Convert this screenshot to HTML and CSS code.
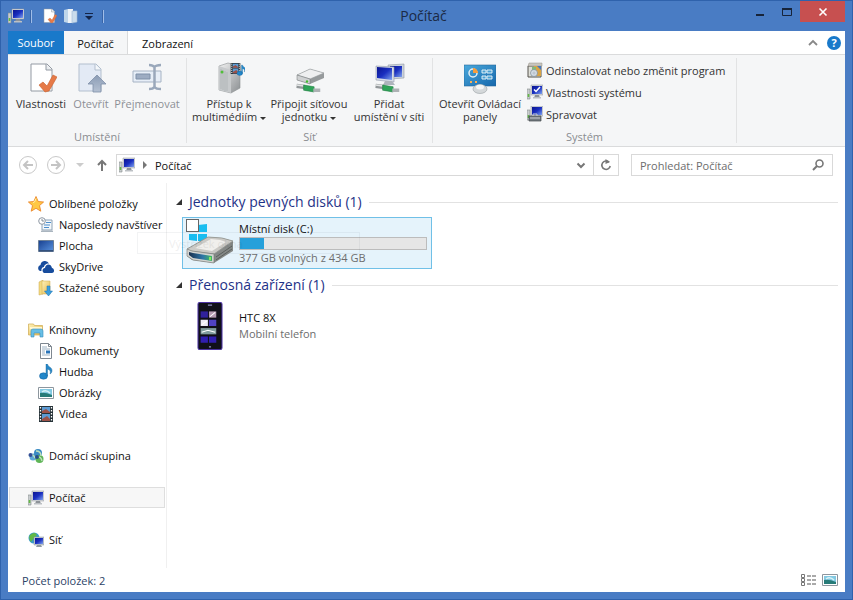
FILE: index.html
```html
<!DOCTYPE html>
<html lang="cs">
<head>
<meta charset="utf-8">
<title>Počítač</title>
<link rel="stylesheet" href="styles.css">
</head>
<body>
<svg class="sprite" aria-hidden="true">
  <defs>
    <linearGradient id="g-screen" x1="0" y1="0" x2="1" y2="1"><stop offset="0" stop-color="#0c1590"/><stop offset=".5" stop-color="#1a2fc0"/><stop offset="1" stop-color="#7fa2ee"/></linearGradient>
    <linearGradient id="g-metal" x1="0" y1="0" x2="1" y2="1"><stop offset="0" stop-color="#f2f2f2"/><stop offset="1" stop-color="#8b8f92"/></linearGradient>
    <linearGradient id="g-blue" x1="0" y1="0" x2="1" y2="1"><stop offset="0" stop-color="#4aa9dc"/><stop offset="1" stop-color="#1667ac"/></linearGradient>
    <linearGradient id="g-folder" x1="0" y1="0" x2="1" y2="1"><stop offset="0" stop-color="#fff3b8"/><stop offset="1" stop-color="#e5b64c"/></linearGradient>
    <linearGradient id="g-arrow" x1="0" y1="0" x2="0" y2="1"><stop offset="0" stop-color="#8b9cb5"/><stop offset="1" stop-color="#b5c1d2"/></linearGradient>
    <linearGradient id="g-front" x1="0" y1="0" x2="1" y2="0"><stop offset="0" stop-color="#19304e"/><stop offset=".6" stop-color="#2f76a8"/><stop offset="1" stop-color="#42b864"/></linearGradient>
    <linearGradient id="g-desk" x1="0" y1="0" x2="1" y2="1"><stop offset="0" stop-color="#173f8f"/><stop offset="1" stop-color="#5a94e0"/></linearGradient>
  </defs>
  <symbol id="computer" viewBox="0 0 16 16">
    <path d="M0 5h3v10H0z" fill="#c9cdcf" stroke="#85898c" stroke-width=".6"/><path d="M.7 10h1.600v3H.7z" fill="#62b944"/>
    <path d="M4 1h12v10H4z" fill="#d6dade" stroke="#8c9298" stroke-width=".5"/><path d="M5 2h10v8H5z" fill="url(#g-screen)"/>
    <path d="M8 11h4l1 3H7z" fill="#8d9298"/><path d="M6 13h8v1.500H6z" fill="#bcc0c4"/>
  </symbol>
  <symbol id="check-page" viewBox="0 0 32 32">
    <path d="M6 2h16l5 5v22H6z" fill="#fff" stroke="#939aa3"/><path d="M21 2v6h6" fill="#e9ecef" stroke="#939aa3"/>
    <path d="M14 23l4-3 4 4 6-11 4 2-8 14-4 1z" fill="#e67a48" stroke="#c85f2b" stroke-width=".6"/>
  </symbol>
  <symbol id="folder-light" viewBox="0 0 16 16">
    <path d="M1 2l4-1v14l-4-1z" fill="#bfd6ea"/><path d="M5 1h5v14H5z" fill="#edf3f8"/><path d="M9 3h5v11l-5 1z" fill="#cadcec" stroke="#9dbbd6" stroke-width=".6"/>
  </symbol>
  <symbol id="open-page" viewBox="0 0 32 32">
    <path d="M4 2h17l5 5v22H4z" fill="#e3eaf5" stroke="#b3bfce"/><path d="M20 2v6h6" fill="#f4f7fa" stroke="#b3bfce"/>
    <path d="M22 13l9 9h-5v8h-8v-8h-5z" fill="url(#g-arrow)" stroke="#7f8fa8" stroke-width=".8"/>
  </symbol>
  <symbol id="rename" viewBox="0 0 32 32">
    <path d="M2 9h28v11H2z" fill="#e7eef7" stroke="#a6b3c4"/><path d="M5 12h14v5H5z" fill="#9dacc2" stroke="#7f90a8"/>
    <path d="M18 3q4 0 5.500 2Q25 3 30 3M18 27q4 0 5.500-2Q25 27 30 27M23.500 5v20" fill="none" stroke="#9aa8bb" stroke-width="2.500"/>
  </symbol>
  <symbol id="film" viewBox="0 0 16 16">
    <path d="M1 0h14v16H1z" fill="#263238"/><path d="M4 1h8v6H4zM4 8h8v7H4z" fill="#5c9bd3"/><path d="M4 5l4-2 4 3v1H4zM4 13l5-3 3 3v2H4z" fill="#9b5148"/>
    <path d="M2.500 1v15M13.500 1v15" stroke="#fff" stroke-width="1.300" stroke-dasharray="1.500 1.500"/>
  </symbol>
  <symbol id="note" viewBox="0 0 16 16">
    <ellipse cx="5.500" cy="12" rx="4" ry="3.200" fill="#2287ca" stroke="#15619f" stroke-width=".5"/>
    <path d="M8 12V0h1.500c0 3 5 3 4.500 7-.2 1.500-1 2.500-2 3 1-3 0-4-2.500-5v7z" fill="#2688c8" stroke="#176398" stroke-width=".4"/>
  </symbol>
  <symbol id="media" viewBox="0 0 32 32">
    <path d="M6 4l9-3 12 3v22l-9 5L6 28z" fill="url(#g-metal)" stroke="#8c9092" stroke-width=".6"/><path d="M6 4l12 4v23L6 28z" fill="#c7cacc"/><path d="M8 7v20M10 8v20M12 9v20M14 10v19" stroke="#a5a9ab" stroke-width=".6"/>
    <circle cx="9" cy="10" r="1.500" fill="#51be39"/><use href="#film" x="17" y="1" width="11" height="11"/><use href="#note" x="23" y="1" width="11" height="15"/>
  </symbol>
  <symbol id="net-cable" viewBox="0 0 32 12">
    <path d="M3 3l8 1 3 2 8 1" stroke="#929799" stroke-width="5" fill="none"/><path d="M3 2l8 1" stroke="#e2e4e5" stroke-width="2"/><path d="M11 2l12 2v6l-12-2z" fill="#2fa358" stroke="#187b3b" stroke-width=".6"/><path d="M22 8h8" stroke="#adb2b4" stroke-width="4"/>
  </symbol>
  <symbol id="netdrive" viewBox="0 0 32 32">
    <path d="M4 13l13-6 14 4v5l-14 6-13-4z" fill="#969a9c"/><path d="M4 13l13-6 14 4-14 6z" fill="#eeeff0" stroke="#94989a" stroke-width=".6"/><path d="M4 13l13 4v5L4 18z" fill="#cfd1d2" stroke="#707577" stroke-width=".5"/>
    <circle cx="14" cy="19.500" r="1.200" fill="#42bd2e"/><use href="#net-cable" x="1" y="21" width="28" height="11"/>
  </symbol>
  <symbol id="addnet" viewBox="0 0 32 32">
    <path d="M15 3l16-1v14l-14 1z" fill="#ccd3dc" stroke="#9199a5" stroke-width=".6"/><path d="M17 4h12v11H17z" fill="url(#g-screen)"/>
    <path d="M3 4l18 1v15L3 18z" fill="#d6dce6" stroke="#9099aa" stroke-width=".6"/><path d="M4 5l15 1v12L4 16z" fill="url(#g-screen)"/><path d="M12 19h7l3 4H10z" fill="#aeb4bc"/>
    <use href="#net-cable" x="0" y="21" width="28" height="11"/>
  </symbol>
  <symbol id="control" viewBox="0 0 32 32">
    <path d="M0 3h32v21H0z" fill="url(#g-blue)" stroke="#25699b" stroke-width=".6"/><circle cx="9" cy="11" r="4" fill="none" stroke="#e3eff5" stroke-width="1.500"/><path d="M9 11V6a5 5 0 0 1 5 5z" fill="#f49d3e"/>
    <path d="M18 8h4v3h-4zM23 8h5v3h-5zM18 14h4v3h-4zM23 14h5v3h-5z" fill="#4ba1d2" stroke="#eff8fb" stroke-width=".9"/><path d="M6 20h2M11 20h2" stroke="#ffb052" stroke-width="2"/>
    <ellipse cx="16" cy="27" rx="7" ry="4.500" fill="#d4d8da" stroke="#989fa2" stroke-width=".6"/><ellipse cx="16" cy="25" rx="4" ry="2.500" fill="#f5f6f6"/>
  </symbol>
  <symbol id="uninstall" viewBox="0 0 16 16">
    <path d="M1 4h13v11H1z" fill="#dfdfd7" stroke="#55524d"/><path d="M2 1h13v3H1z" fill="#c9c6bf" stroke="#96928b" stroke-width=".5"/><path d="M7 4h7v10H7z" fill="#d9a445"/><path d="M5 5h4v3H5z" fill="#83b87a"/><circle cx="7" cy="11" r="3.500" fill="#d5dee6" stroke="#788798" stroke-width=".7"/><circle cx="7" cy="11" r="1" fill="#fff" stroke="#788798" stroke-width=".5"/><path d="M10 4h4v4z" fill="#4677bd"/>
  </symbol>
  <symbol id="sysprops" viewBox="0 0 16 16"><use href="#computer" width="16" height="16"/><path d="M7 5.500l2 2 4-4.500" fill="none" stroke="#fff" stroke-width="1.500"/></symbol>
  <symbol id="manage" viewBox="0 0 16 16"><use href="#computer" y="-1" width="16" height="16"/><path d="M2 10h12v5H2z" fill="#747b82" stroke="#42474c" stroke-width=".7"/><path d="M6 10V8h4v2M3 12h10" fill="none" stroke="#cacdd0"/></symbol>
  <symbol id="star" viewBox="0 0 16 16"><path d="M8 .5l2.200 5 5.400.5-4.100 3.600 1.300 5.600L8 12.300l-4.800 2.900 1.300-5.600L.4 6l5.400-.5z" fill="#ffc844" stroke="#e87e20" stroke-width=".8"/><path d="M5 6.500l1.500-.5L8 2.500" fill="none" stroke="#fff0ab"/></symbol>
  <symbol id="recent" viewBox="0 0 16 16"><path d="M4 3h10v10H4z" fill="#f3f7fa" stroke="#8da2b6"/><path d="M3 13.500h12V15H3z" fill="#aab5bf"/><path d="M8 5.500h5M6 8h6M6 10.500h5" stroke="#4c8ecc"/><circle cx="4" cy="4" r="3.300" fill="#fff" stroke="#8d97a2"/><path d="M4 2v2h2" fill="none" stroke="#667480" stroke-width=".8"/></symbol>
  <symbol id="desktop" viewBox="0 0 16 16"><path d="M.5 2.500h15v11H.5z" fill="url(#g-desk)" stroke="#6c7f96"/><path d="M1 12h14v1.500H1z" fill="#33517d"/></symbol>
  <symbol id="cloud" viewBox="0 0 16 16"><path d="M2 12a3.200 3.200 0 0 1 .5-6A4.500 4.500 0 0 1 11 4.500C7.500 4 6 7 6 8c-2 .3-3 2-2.500 4z" fill="#174c9d"/><path d="M6 14C3.500 12.500 4.500 9 7 9c.4-4.500 6-5 7 0 3 .8 2.500 5 0 5z" fill="#174c9d"/></symbol>
  <symbol id="download" viewBox="0 0 16 16"><path d="M1 2l4-2v14l-4 1z" fill="#f3da80" stroke="#c9a74d" stroke-width=".5"/><path d="M4 1h8v13H4z" fill="url(#g-folder)" stroke="#cfaa4f" stroke-width=".5"/><path d="M9 6h3v5h2.500l-4 5-4-5H9z" fill="#3c9fdd" stroke="#1d70b1" stroke-width=".5"/></symbol>
  <symbol id="libraries" viewBox="0 0 16 16"><path d="M.5 2h5l1 1.500h8V13H.5z" fill="url(#g-folder)" stroke="#cda950" stroke-width=".7"/><path d="M2 5h12v2H2z" fill="#fff8d2"/><path d="M3 9q0-2 2-2h8q2 0 2 2v6h-3v-4H6v4H3z" fill="#67bee5" stroke="#398ebd" stroke-width=".6"/></symbol>
  <symbol id="document" viewBox="0 0 16 16"><path d="M2.500.5h8l3 3v12h-11z" fill="#fff" stroke="#7e8790"/><path d="M10.500.5v3h3" fill="none" stroke="#7e8790"/><path d="M4 4h5M4 6h8M4 8h3M4 10h3M4 12h8" stroke="#90a8bc" stroke-width=".9"/><path d="M8 7.500h4v3H8z" fill="#2974b9"/></symbol>
  <symbol id="picture" viewBox="0 0 16 16"><path d="M.5 2.500h15v11H.5z" fill="#fff" stroke="#8d969e"/><path d="M2 4h12v8H2z" fill="#83c9e2"/><path d="M2 8q5-1 12 2v2H2z" fill="#277b78"/><path d="M4 7q4-3 8 1" fill="none" stroke="#d9f3f7" stroke-width="1.500"/></symbol>
  <symbol id="homegroup" viewBox="0 0 16 16"><circle cx="5" cy="9" r="3.500" fill="#5da7d6"/><circle cx="10" cy="5" r="4" fill="#398ac3"/><circle cx="11.500" cy="11" r="4" fill="#5fb557"/><path d="M1 8q4-3 6 2M8 3q5 0 5 5M9 9q4-1 5 4" fill="none" stroke="#bde1bd" stroke-width="1.400"/><circle cx="2.500" cy="7" r="2" fill="#354f97"/><circle cx="9" cy="9" r="2" fill="#274e86"/></symbol>
  <symbol id="network" viewBox="0 0 16 16"><circle cx="6" cy="6" r="5.500" fill="#369bc9"/><path d="M2 3q5-4 7 0L6 6l-3 4Q0 6 2 3z" fill="#62b845"/><path d="M6 5h10v8H6z" fill="#c4cbd2" stroke="#8a929a" stroke-width=".5"/><path d="M7 6h8v6H7z" fill="url(#g-screen)"/><path d="M9 13h4l1 2H8z" fill="#919aa1"/></symbol>
  <symbol id="disk" viewBox="0 0 48 48">
    <path d="M3 7l8-1v7H3zM12 6l9-1v8h-9zM3 15h8v7l-8-1zM12 15h9v8l-9-1z" fill="#18bdf0"/>
    <path d="M1 30l21-12 14 1 11 3v10L28 44 6 41l-5-4z" fill="#858987"/><path d="M1 30l21-12 14 1 11 3-19 13-24-3z" fill="#cbcac6" stroke="#92948f" stroke-width=".8"/><path d="M9 29l16-9 9 1 6 2-14 9z" fill="#f0efec"/>
    <path d="M1 30l5 2 22 3v9L7 41l-6-4z" fill="#d3d4d1" stroke="#737773" stroke-width=".6"/><path d="M3 33l4 1 19 3v5L7 39l-4-3z" fill="url(#g-front)"/><path d="M24 38v3" stroke="#a0ff57" stroke-width="1.500"/>
    <path d="M30 41l16-11M30 38l16-11" stroke="#5c605e"/>
  </symbol>
  <symbol id="phone" viewBox="0 0 24 46">
    <rect x=".5" y=".5" width="23" height="45" rx="1.500" fill="#101019" stroke="#4b32a2"/><path d="M3 9h7v6H3z" fill="#30219c"/><path d="M11 9h7v6h-7z" fill="#b59bb2"/><path d="M3 17h7v6H3z" fill="#eceaf7"/><path d="M11 17h7v6h-7z" fill="#5042c4"/><path d="M3 25h15v6H3z" fill="#819d9e"/><path d="M3 33h7v6H3zM11 33h7v6h-7z" fill="#301eb0"/><path d="M4 22l5-4M12 14l5-4M4 29l6-2 7 2" stroke="#fff" fill="none"/><path d="M11 43h2M10 3h4" stroke="#8d8dc0"/>
  </symbol>
</svg>

<div class="window">
  <header class="titlebar">
    <div class="quick">
      <svg class="i16"><use href="#computer"/></svg><span class="bar"></span>
      <button aria-label="Vlastnosti"><svg class="i16"><use href="#check-page"/></svg></button>
      <button aria-label="Nová složka"><svg class="i16"><use href="#folder-light"/></svg></button>
      <button aria-label="Přizpůsobit panel"><svg class="caret" viewBox="0 0 8 8"><path d="M0 1.500h8" stroke="#142447"/><path d="M0 4h8L4 8z" fill="#142447"/></svg></button><span class="bar"></span>
    </div>
    <h1>Počítač</h1>
    <div class="controls">
      <button aria-label="Minimalizovat"><svg viewBox="0 0 12 12"><path d="M2 9h8" stroke="#17243a" stroke-width="2"/></svg></button>
      <button aria-label="Maximalizovat"><svg viewBox="0 0 12 12"><path d="M1.500 2.500h9v7h-9z" fill="none" stroke="#17243a"/><path d="M1 3h10" stroke="#17243a" stroke-width="2"/></svg></button>
      <button class="close" aria-label="Zavřít"><svg viewBox="0 0 12 12"><path d="M2.500 2.500l7 7m0-7l-7 7" stroke="#fff" stroke-width="1.600"/></svg></button>
    </div>
  </header>

  <div class="client">
    <div class="tabs">
      <button class="tab file">Soubor</button><button class="tab active">Počítač</button><button class="tab">Zobrazení</button>
      <div class="help">
        <button aria-label="Sbalit pás karet"><svg class="i12" viewBox="0 0 12 12"><path d="M2 8l4-4 4 4" fill="none" stroke="#888" stroke-width="1.800"/></svg></button>
        <button class="question" aria-label="Nápověda">?</button>
      </div>
    </div>

    <div class="ribbon">
      <section class="group location">
        <div class="tools">
          <button class="tool"><svg class="i32"><use href="#check-page"/></svg><span>Vlastnosti</span></button>
          <button class="tool" disabled><svg class="i32"><use href="#open-page"/></svg><span>Otevřít</span></button>
          <button class="tool wide" disabled><svg class="i32"><use href="#rename"/></svg><span>Přejmenovat</span></button>
        </div>
        <h2>Umístění</h2>
      </section>
      <section class="group net">
        <div class="tools">
          <button class="tool"><svg class="i32"><use href="#media"/></svg><span>Přístup k<br>multimédiím <i class="drop"></i></span></button>
          <button class="tool"><svg class="i32"><use href="#netdrive"/></svg><span>Připojit síťovou<br>jednotku <i class="drop"></i></span></button>
          <button class="tool"><svg class="i32"><use href="#addnet"/></svg><span>Přidat<br>umístění v síti</span></button>
        </div>
        <h2>Síť</h2>
      </section>
      <section class="group system">
        <div class="tools">
          <button class="tool"><svg class="i32"><use href="#control"/></svg><span>Otevřít Ovládací<br>panely</span></button>
          <div class="stack">
            <button><svg class="i16"><use href="#uninstall"/></svg>Odinstalovat nebo změnit program</button>
            <button><svg class="i16"><use href="#sysprops"/></svg>Vlastnosti systému</button>
            <button><svg class="i16"><use href="#manage"/></svg>Spravovat</button>
          </div>
        </div>
        <h2>Systém</h2>
      </section>
    </div>

    <div class="navbar">
      <button aria-label="Zpět"><svg class="i20" viewBox="0 0 20 20"><circle cx="10" cy="10" r="8.500" fill="none" stroke="#c9c9c9"/><path d="M15 10H6m4-4l-4 4 4 4" fill="none" stroke="#c4c4c4" stroke-width="2"/></svg></button>
      <button aria-label="Vpřed"><svg class="i20" viewBox="0 0 20 20"><circle cx="10" cy="10" r="8.500" fill="none" stroke="#c9c9c9"/><path d="M5 10h9m-4-4l4 4-4 4" fill="none" stroke="#c4c4c4" stroke-width="2"/></svg></button>
      <button class="recent" aria-label="Poslední umístění"><svg class="caret" viewBox="0 0 8 8"><path d="M0 2h8L4 6z" fill="#ccc"/></svg></button>
      <button aria-label="Nahoru"><svg class="i12" viewBox="0 0 12 12"><path d="M6 12V2M2 6l4-4 4 4" fill="none" stroke="#777" stroke-width="2"/></svg></button>
      <div class="address">
        <svg class="i16"><use href="#computer"/></svg>
        <svg class="caret" viewBox="0 0 8 8"><path d="M2 0v8l4-4z" fill="#777"/></svg>
        <a href="#">Počítač</a>
        <button class="history" aria-label="Předchozí umístění"><svg class="i12" viewBox="0 0 12 12"><path d="M2.500 4.500L6 8l3.500-3.500" fill="none" stroke="#777" stroke-width="2"/></svg></button>
        <button class="refresh" aria-label="Aktualizovat"><svg class="i12" viewBox="0 0 12 12"><path d="M9 3.200A4.200 4.200 0 1 0 10.200 7" fill="none" stroke="#777" stroke-width="1.600"/><path d="M5.500 0v5L10 3z" fill="#777"/></svg></button>
      </div>
      <div class="search">
        <input type="search" aria-label="Prohledat" placeholder="Prohledat: Počítač">
        <svg class="i12" viewBox="0 0 12 12"><circle cx="7.500" cy="4.500" r="3.500" fill="none" stroke="#777" stroke-width="1.600"/><path d="M5 7l-4 4" stroke="#777" stroke-width="2"/></svg>
      </div>
    </div>

    <div class="body">
      <nav class="side">
        <ul>
          <li><a href="#"><svg class="i16"><use href="#star"/></svg>Oblíbené položky</a></li>
          <li class="sub"><a href="#"><svg class="i16"><use href="#recent"/></svg>Naposledy navštíver</a></li>
          <li class="sub"><a href="#"><svg class="i16"><use href="#desktop"/></svg>Plocha</a></li>
          <li class="sub"><a href="#"><svg class="i16"><use href="#cloud"/></svg>SkyDrive</a></li>
          <li class="sub"><a href="#"><svg class="i16"><use href="#download"/></svg>Stažené soubory</a></li>
        </ul>
        <ul>
          <li><a href="#"><svg class="i16"><use href="#libraries"/></svg>Knihovny</a></li>
          <li class="sub"><a href="#"><svg class="i16"><use href="#document"/></svg>Dokumenty</a></li>
          <li class="sub"><a href="#"><svg class="i16"><use href="#note"/></svg>Hudba</a></li>
          <li class="sub"><a href="#"><svg class="i16"><use href="#picture"/></svg>Obrázky</a></li>
          <li class="sub"><a href="#"><svg class="i16"><use href="#film"/></svg>Videa</a></li>
        </ul>
        <ul><li><a href="#"><svg class="i16"><use href="#homegroup"/></svg>Domácí skupina</a></li></ul>
        <ul><li class="selected"><a href="#"><svg class="i16"><use href="#computer"/></svg>Počítač</a></li></ul>
        <ul><li><a href="#"><svg class="i16"><use href="#network"/></svg>Síť</a></li></ul>
      </nav>
      <main>
        <h3><svg class="tri" viewBox="0 0 6 6"><path d="M6 0v6H0z" fill="#333"/></svg>Jednotky pevných disků (1)</h3>
        <div class="tile drive">
          <svg class="i48"><use href="#disk"/></svg>
          <input type="checkbox" aria-label="Vybrat Místní disk (C:)">
          <div class="info">
            <strong>Místní disk (C:)</strong>
            <div class="meter"><div class="fill" style="width:13%"></div></div>
            <span>377 GB volných z 434 GB</span>
          </div>
        </div>
        <h3><svg class="tri" viewBox="0 0 6 6"><path d="M6 0v6H0z" fill="#333"/></svg>Přenosná zařízení (1)</h3>
        <div class="tile">
          <svg class="i48"><use href="#phone"/></svg>
          <div class="info"><strong>HTC 8X</strong><span>Mobilní telefon</span></div>
        </div>
      </main>
      <div class="ghost">Výstřižek okna</div>
    </div>

    <footer>
      <span>Počet položek: 2</span>
      <div class="views">
        <button aria-label="Podrobnosti"><svg class="i16" viewBox="0 0 16 16"><path d="M1.500 2.500h3v3h-3zM1.500 6.500h3v3h-3zM1.500 10.500h3v3h-3z" fill="#fff" stroke="#777"/><path d="M7 4h4m1 0h4M7 8h4m1 0h4M7 12h4m1 0h4" stroke="#555"/></svg></button>
        <button aria-label="Velké ikony"><svg class="i16"><use href="#picture"/></svg></button>
      </div>
    </footer>
  </div>
</div>
</body>
</html>
```
FILE: styles.css
```css
* { box-sizing: border-box; }
body { margin: 0; font: 11px/13px "Open Sans", "Noto Sans", sans-serif; color: #111; }
h1, h2, h3, ul { margin: 0; padding: 0; font-weight: 400; list-style: none; }
button { margin: 0; padding: 0; border: 0; background: none; font: inherit; color: inherit; display: flex; align-items: center; justify-content: center; }
a { color: inherit; text-decoration: none; }
svg { display: block; flex: none; }
.sprite { position: absolute; width: 0; height: 0; }
.i12 { width: 12px; height: 12px; }
.i16 { width: 16px; height: 16px; }
.i20 { width: 20px; height: 20px; }
.i32 { width: 32px; height: 32px; }
.i48 { width: 48px; height: 48px; }
.caret { width: 8px; height: 8px; }

.window { min-height: 100vh; display: flex; flex-direction: column; padding: 0 7px 7px; background: #497cc4; border: 1px solid #2f62ac; }
.titlebar { height: 30px; display: grid; grid-template-columns: 1fr auto 1fr; align-items: center; }
.titlebar h1 { margin-right: 6px; font-size: 14px; line-height: 20px; color: #1b2a44; }
.quick { display: flex; align-items: center; gap: 6px; }
.quick .bar { width: 2px; height: 13px; margin-right: 3px; background: #3764a8; border-right: 1px solid #a0bde8; }
.quick .caret { margin-right: 3px; }
.controls { display: flex; justify-content: flex-end; align-self: start; }
.controls button { width: 27px; height: 21px; }
.controls svg { width: 12px; height: 12px; }
.controls .close { width: 45px; background: #c75050; }

.client { flex: 1; display: flex; flex-direction: column; background: #fff; }
.tabs { height: 23px; display: flex; }
.tab { padding: 2px 14px 0; }
.tab.file { width: 56px; padding: 0; background: #1979ca; color: #fff; }
.tab.active { width: 64px; padding: 2px 0 0; background: #f5f6f7; border-right: 1px solid #dadbdc; }
.help { margin-left: auto; display: flex; align-items: center; gap: 8px; padding-right: 4px; }
.question { width: 14px; height: 14px; border-radius: 50%; background: #1979ca; color: #fff; font-weight: 700; }

.ribbon { height: 93px; display: flex; padding-top: 3px; background: #f5f6f7; border-top: 1px solid #dadbdc; border-bottom: 1px solid #dadbdc; color: #333; }
.group { display: flex; flex-direction: column; justify-content: space-between; margin-bottom: 3px; border-right: 1px solid #e2e3e4; }
.group h2 { font-size: 11px; line-height: 13px; text-align: center; color: #8a8d91; }
.location { width: 179px; }
.net { width: 246px; }
.system { width: 304px; }
.tools { display: flex; padding-top: 4px; white-space: nowrap; }
.tool { flex-direction: column; justify-content: flex-start; gap: 3px; width: 50px; }
.location .tools { padding-left: 8px; }
.tool.wide { width: 62px; }
.tool:disabled { color: #8d9096; }
.net .tools { padding-left: 2px; }
.net .tool { width: 80px; }
.system .tool { width: 94px; }
.drop { display: inline-block; vertical-align: middle; border: 3px solid transparent; border-top-color: #333; border-bottom: 0; }
.stack { display: flex; flex-direction: column; gap: 6px; }
.stack button { gap: 3px; justify-content: flex-start; height: 16px; }

.navbar { height: 36px; display: flex; align-items: center; padding: 0 12px 0 10px; gap: 8px; }
.recent { padding: 0 4px 0 2px; }
.address { flex: 1; height: 22px; display: flex; align-items: center; gap: 6px; padding-left: 2px; border: 1px solid #d9d9d9; }
.address a { flex: 1; }
.refresh { width: 25px; height: 20px; border-left: 1px solid #d9d9d9; }
.history { width: 12px; }
.search { flex: 0 1 202px; height: 22px; display: flex; align-items: center; margin-left: 4px; padding: 0 8px; border: 1px solid #d9d9d9; }
.search input { flex: 1; min-width: 0; padding: 0; border: 0; outline: 0; background: none; font: inherit; }
.search input::placeholder { color: #6d6d6d; opacity: 1; }

.body { flex: 1; display: flex; position: relative; }
.side { width: 159px; padding: 10px 1px 0; border-right: 1px solid #f0f0f0; }
.side ul + ul { margin-top: 21px; }
.side li { height: 21px; padding-left: 18px; border: 1px solid transparent; }
.side .sub { padding-left: 28px; }
.side a { display: flex; align-items: center; gap: 5px; height: 19px; white-space: nowrap; }
.side .selected { background: #f7f7f7; border-color: #dedede; }
main { flex: 1; padding: 9px 7px 0 9px; }
h3 { display: flex; align-items: center; gap: 7px; height: 20px; font-size: 14px; line-height: 20px; color: #1e3287; }
h3::after { content: ""; flex: 1; height: 1px; background: #e2e2e2; }
.tri { width: 6px; height: 6px; }
.tile { width: 250px; height: 52px; display: flex; align-items: center; gap: 5px; position: relative; margin: 5px 0 6px 6px; padding: 0 4px 0 3px; border: 1px solid transparent; }
.drive { background: #e5f3fb; border-color: #70c0e7; }
.tile input { position: absolute; left: 3px; top: 1px; width: 13px; height: 13px; margin: 0; appearance: none; background: #fff; border: 1px solid #666; }
.info { flex: 1; }
.info strong, .info span { display: block; font-weight: 400; line-height: 16px; }
.info span { color: #6d6d6d; }
.meter { height: 13px; background: #e6e6e6; border: 1px solid #bcbcbc; }
.fill { height: 100%; background: #26a0da; }
.ghost { position: absolute; left: 129px; top: 49px; width: 223px; height: 22px; padding: 4px 31px; border: 1px solid #567; opacity: .07; }

footer { height: 24px; display: flex; align-items: center; justify-content: space-between; padding: 0 7px 0 14px; color: #2c4266; }
.views { display: flex; gap: 6px; }
```
